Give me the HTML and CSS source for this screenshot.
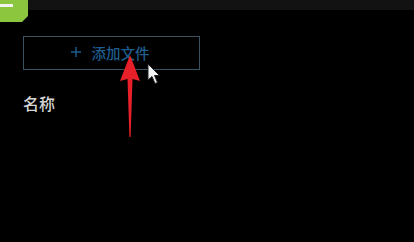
FILE: index.html
```html
<!DOCTYPE html>
<html lang="zh-CN">
<head>
    <meta charset="UTF-8">
    <title>文件</title>
    <link rel="stylesheet" href="styles.css">
</head>
<body>

<header class="topbar">
    <svg class="logo" width="28" height="22" viewBox="0 0 28 22">
        <polygon points="0,0 28,0 28,16 22,22 0,22" fill="#8cc63f"/>
        <rect x="0" y="4" width="13" height="3" fill="#f2f2f2"/>
    </svg>
</header>

<main class="content">
    <button class="add-btn">
        <svg class="plus" width="10" height="10" viewBox="0 0 10 10">
            <path d="M5 0 V10 M0 5 H10" stroke="#1f5d8e" stroke-width="1.4"/>
        </svg>
        添加文件
    </button>
    <div class="col-title">名称</div>
</main>

<!-- annotation overlay -->
<svg class="arrow" width="24" height="84" viewBox="0 0 24 84">
    <polygon points="12,0 22,26 14.5,24 12.6,82 11.4,82 9.5,24 2,26" fill="#e8202a"/>
</svg>
<svg class="cursor" width="16" height="24" viewBox="0 0 16 24">
    <path d="M1 1 L1 17 L5 13.5 L8 20.5 L10.5 19.5 L7.5 12.5 L12.5 12.5 Z" fill="#f4f4f4" stroke="#222" stroke-width="1"/>
</svg>

</body>
</html>
```

FILE: styles.css
```css
body {
    margin: 0;
    background-color: #000;
    font-family: "Noto Sans CJK SC", "Noto Sans", sans-serif;
    width: 414px;
    height: 242px;
    overflow: hidden;
    position: relative;
}

.topbar {
    height: 10px;
    background-color: #121212;
    position: relative;
}

.logo {
    display: block;
    position: absolute;
    left: 0;
    top: 0;
}

.content {
    padding: 26px 0 0 23px;
}

.add-btn {
    display: flex;
    align-items: center;
    justify-content: center;
    width: 177px;
    height: 34px;
    margin: 0;
    padding: 0 0 2px 0;
    background: transparent;
    border: 1px solid #3b5260;
    color: #1f5d8e;
    font-family: "Noto Sans CJK SC", sans-serif;
    font-size: 14.5px;
    font-weight: 500;
}

.plus {
    display: block;
    margin-right: 11px;
    margin-left: -3px;
}

.col-title {
    margin-top: 21px;
    color: #d6d6d6;
    font-size: 16px;
    font-weight: 500;
}

.arrow {
    position: absolute;
    left: 118px;
    top: 55px;
}

.cursor {
    position: absolute;
    left: 147px;
    top: 63px;
}
```
